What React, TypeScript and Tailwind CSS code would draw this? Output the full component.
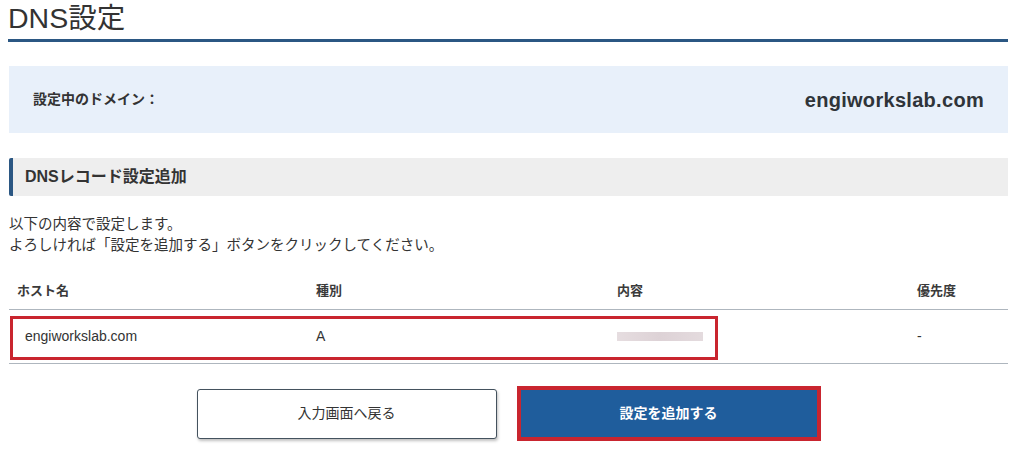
const FONT = { fontFamily: '"Liberation Sans", "Noto Sans CJK JP", Arial, sans-serif' }

export default function App() {
  return (
    <div className="w-[1017px] h-[460px] bg-white px-[9px] text-[#333] overflow-hidden" style={FONT}>
      {/* page title */}
      <h1 className="text-[28.5px] leading-[36px] font-normal text-[#333] -ml-px pb-[3px] border-b-[3px] border-[#2b5783]">
        DNS設定
      </h1>

      {/* current domain */}
      <div className="mt-[24px] h-[67px] bg-[#e8f0fa] flex items-center justify-between pl-[24px] pr-[24px]">
        <span className="text-[14px] font-bold text-[#333]">設定中のドメイン：</span>
        <span className="text-[20px] font-bold tracking-[0.3px] text-[#2f3439]">engiworkslab.com</span>
      </div>

      {/* section header */}
      <div className="mt-[25px] h-[38px] bg-[#eeeeee] border-l-4 border-[#2b5783] rounded-l-[2px] flex items-center pl-[12px]">
        <h2 className="text-[16px] font-bold text-[#333]">DNSレコード設定追加</h2>
      </div>

      <p className="mt-[18px] text-[14.5px] leading-[21px] text-[#333]">
        以下の内容で設定します。
        <br />
        よろしければ「設定を追加する」ボタンをクリックしてください。
      </p>

      {/* record table */}
      <div className="mt-[16px]">
        <div className="grid grid-cols-[299px_301px_300px_1fr] h-[38px] items-center border-b border-[#aeb6be] text-[13px] font-bold text-[#3a3a3a]">
          <div className="pl-2">ホスト名</div>
          <div className="pl-2">種別</div>
          <div className="pl-2">内容</div>
          <div className="pl-2">優先度</div>
        </div>
        <div className="relative grid grid-cols-[299px_301px_300px_1fr] h-[54px] items-center border-b border-[#aeb6be] text-[14px] text-[#333]">
          <div className="pl-4">engiworkslab.com</div>
          <div className="pl-2">A</div>
          <div className="pl-2">
            <div className="h-[9px] w-[86px] bg-gradient-to-r from-[#e6dde0] via-[#ddd2d6] to-[#e4dbde] blur-[0.5px]" />
          </div>
          <div className="pl-2">-</div>
          <div className="absolute left-[1px] top-[6px] w-[708px] h-[44px] border-[3px] border-[#c9252f]" />
        </div>
      </div>

      {/* actions */}
      <div className="mt-[22px] flex items-center justify-center gap-[20px]">
        <button className="w-[300px] h-[50px] bg-white border border-[#44525e] rounded-[3px] shadow-[1px_2px_3px_rgba(0,0,0,0.25)] text-[14px] text-[#333]">
          入力画面へ戻る
        </button>
        <button className="w-[304px] h-[55px] bg-[#1f5d9c] border-4 border-[#c9252f] text-[14px] font-bold text-white">
          設定を追加する
        </button>
      </div>
    </div>
  )
}
